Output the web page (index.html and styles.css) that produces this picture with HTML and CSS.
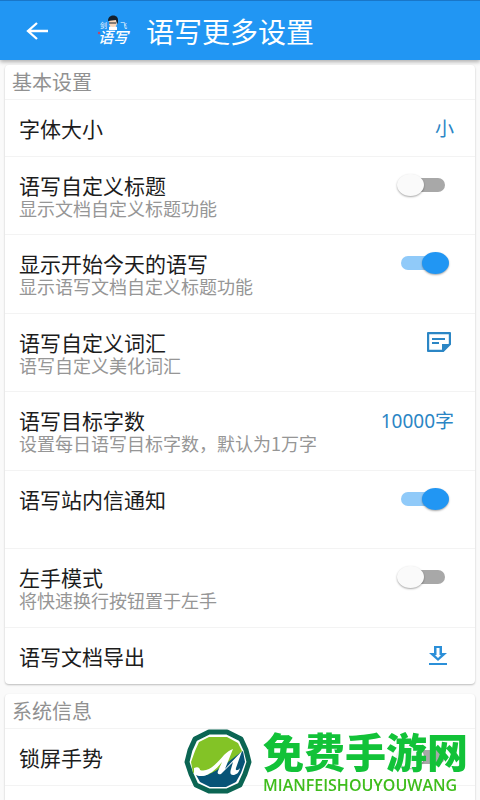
FILE: index.html
```html
<!DOCTYPE html>
<html lang="zh-CN">
<head>
    <meta charset="UTF-8">
    <meta name="viewport" content="width=device-width, initial-scale=1.0">
    <title>语写更多设置</title>
    <link rel="stylesheet" href="styles.css">
</head>
<body>
    <header class="app-bar">
        <button class="back" type="button" aria-label="返回">
            <svg width="24" height="20" viewBox="0 0 24 20" fill="none" stroke="#fff" stroke-width="2.3">
                <path d="M22 10H2M11 2L2 10l9 8"/>
            </svg>
        </button>
        <svg class="app-logo" width="36" height="32" viewBox="0 0 36 32" aria-hidden="true">
            <text class="logo-small" x="4" y="13">剑</text>
            <text class="logo-small" x="24" y="13">飞</text>
            <path fill="#fff" d="M13 12l4-2 4 2v3h-8z"/>
            <circle cx="17" cy="8" r="4" fill="#f6d7bd"/>
            <path fill="#14202c" d="M12 6c0-7 10-7 10-1 0 2 0 3-1 4l-1-4-8 1z"/>
            <path stroke="#14202c" d="M13 8h7"/>
            <circle cx="3" cy="18" r="1.2" fill="#c0476a"/>
            <text class="logo-text" x="2" y="28">语写</text>
        </svg>
        <h1>语写更多设置</h1>
    </header>

    <main>
        <section class="card">
            <h2>基本设置</h2>
            <div class="row short">
                <div class="text"><h3>字体大小</h3></div>
                <button class="value" type="button">小</button>
            </div>
            <div class="row">
                <div class="text">
                    <label for="custom-title">语写自定义标题</label>
                    <p>显示文档自定义标题功能</p>
                </div>
                <input class="switch" type="checkbox" id="custom-title">
            </div>
            <div class="row">
                <div class="text">
                    <label for="show-today">显示开始今天的语写</label>
                    <p>显示语写文档自定义标题功能</p>
                </div>
                <input class="switch" type="checkbox" id="show-today" checked>
            </div>
            <div class="row">
                <div class="text">
                    <h3>语写自定义词汇</h3>
                    <p>语写自定义美化词汇</p>
                </div>
                <button class="icon" type="button" aria-label="编辑词汇">
                    <svg width="24" height="20" viewBox="0 0 24 20">
                        <path fill="none" stroke="#2b86c5" stroke-width="2.4" stroke-linejoin="round" d="M2 1h20q1 0 1 1v10l-7 7H2q-1 0-1-1V2q0-1 1-1z"/>
                        <path fill="none" stroke="#2b86c5" stroke-width="2" d="M5 7h13M5 11h7"/>
                        <path fill="#2b86c5" d="M15 12h8l-8 7z"/>
                    </svg>
                </button>
            </div>
            <div class="row">
                <div class="text">
                    <h3>语写目标字数</h3>
                    <p>设置每日语写目标字数，默认为1万字</p>
                </div>
                <button class="value" type="button">10000字</button>
            </div>
            <div class="row">
                <div class="text"><label for="mail">语写站内信通知</label></div>
                <input class="switch" type="checkbox" id="mail" checked>
            </div>
            <div class="row">
                <div class="text">
                    <label for="left-hand">左手模式</label>
                    <p>将快速换行按钮置于左手</p>
                </div>
                <input class="switch" type="checkbox" id="left-hand">
            </div>
            <div class="row short">
                <div class="text"><h3>语写文档导出</h3></div>
                <button class="icon" type="button" aria-label="导出">
                    <svg class="download" width="20" height="20" viewBox="0 0 20 20" fill="#2b8fd8">
                        <path fill-rule="evenodd" d="M6 0h8v7h5l-9 8-9-8h5zM8.500 2v7H7l3 3 3-3h-1.500V2z"/>
                        <path d="M1 17h18v2H1z"/>
                    </svg>
                </button>
            </div>
        </section>

        <section class="card last">
            <h2>系统信息</h2>
            <div class="row short">
                <div class="text"><label for="lock">锁屏手势</label></div>
                <input class="switch" type="checkbox" id="lock">
            </div>
            <div class="row next"></div>
        </section>
    </main>

    <!-- Site mark over the page -->
    <div class="watermark">
        <svg width="68" height="66" viewBox="0 0 68 66" aria-hidden="true">
            <path fill="#fff" stroke="#0b6553" stroke-width="5" stroke-linejoin="round" d="M25 3h18l14 7 5 11 3 12-4 12-5 11-13 6H25l-13-6-5-11-4-12 3-12 5-11z"/>
            <path fill="#83c326" d="M25 8h18l11 6 5 10-1 2C44 33 31 49 20 45c-5-2-7-3-11-1L7 33l4-11 4-9z"/>
            <path fill="#075477" d="M59 22l2 11-4 11-5 9-10 5H26l-10-5-4-7c14 4 24-8 47-24z"/>
            <path fill="#fff" d="M10 39c4-2 6 0 6 2 9 3 18-8 24-15 3-3 6-5 9-6l-8 20 17-18-6 17c-1 3 2 3 4 0-1 5-4 7-7 7-3 0-3-3-2-6l2-7-12 12c-3 1-4-1-3-3l4-9C30 43 20 51 10 45z"/>
        </svg>
        <div class="mark-text">
            <strong>免费手游网</strong>
            <span>MIANFEISHOUYOUWANG</span>
        </div>
    </div>
</body>
</html>
```
FILE: styles.css
```css
* {
    box-sizing: border-box;
}

body {
    margin: 0;
    min-height: 100vh;
    display: flex;
    flex-direction: column;
    background: #fafafa;
    color: #1c1c1c;
    font-family: "Noto Sans CJK SC", sans-serif;
}

h1, h2, h3, p {
    margin: 0;
    font-weight: 400;
}

button {
    padding: 0;
    border: none;
    background: none;
    font-family: inherit;
    cursor: pointer;
}

svg {
    display: block;
}

.app-bar {
    display: flex;
    align-items: center;
    height: 60px;
    padding: 0 24px;
    background: #2196f3;
    border-top: 1px solid #1976c8;
    box-shadow: 0 2px 4px rgba(0, 0, 0, 0.3);
    color: #fff;
}

.back {
    padding: 0 2px;
}

.app-logo {
    margin: 0 14px 0 44px;
    overflow: visible;
    fill: #fff;
}

.logo-small {
    font-size: 7px;
}

.logo-text {
    font-size: 15px;
    font-style: italic;
    font-weight: 500;
}

h1 {
    font-size: 28px;
    line-height: 40px;
}

main {
    flex: 1;
    display: flex;
    flex-direction: column;
    gap: 10px;
    padding: 5px 5px 0;
}

.card {
    background: #fff;
    border-radius: 4px;
    box-shadow: 0 1px 2px rgba(0, 0, 0, 0.25);
}

.card.last {
    flex: 1;
    border-radius: 4px 4px 0 0;
}

h2 {
    padding: 0 7px;
    color: #919191;
    font-size: 20px;
    line-height: 34px;
}

.row {
    display: flex;
    justify-content: space-between;
    align-items: flex-start;
    min-height: 79px;
    padding: 15px 21px 0 14px;
    border-top: 1px solid #f3f3f3;
}

.row:nth-child(odd) {
    min-height: 78px;
}

.row.short {
    min-height: 57px;
}

.row.next {
    min-height: 0;
    padding: 0;
}

h3, label {
    display: block;
    font-size: 21px;
    line-height: 26px;
}

.text p {
    color: #969696;
    font-size: 18px;
    line-height: 20px;
}

.value {
    color: #2b86c5;
    font-family: "Noto Sans", "Noto Sans CJK SC", sans-serif;
    font-size: 19px;
    line-height: 28px;
}

.icon {
    display: flex;
    align-items: center;
    height: 26px;
    padding-right: 3px;
}

.download {
    margin-right: 3px;
}

.switch {
    appearance: none;
    position: relative;
    width: 52px;
    height: 24px;
    margin: 1px 5px 0 0;
    cursor: pointer;
}

.switch::before {
    content: "";
    position: absolute;
    left: 4px;
    right: 4px;
    top: 5px;
    height: 14px;
    border-radius: 8px;
    background: #a8a8a8;
}

.switch::after {
    content: "";
    position: absolute;
    left: 0;
    top: 1px;
    width: 27px;
    height: 22px;
    border-radius: 50%;
    background: #fafafa;
    box-shadow: 0 1px 2px rgba(0, 0, 0, 0.35);
}

.switch:checked::before {
    background: #90caf9;
}

.switch:checked::after {
    left: auto;
    right: 0;
    background: #2196f3;
}

.watermark {
    position: fixed;
    right: 12px;
    bottom: 5px;
    display: flex;
    align-items: center;
    gap: 11px;
    pointer-events: none;
}

.mark-text {
    display: flex;
    flex-direction: column;
    gap: 6px;
    color: #12c238;
}

.mark-text strong {
    font-size: 41px;
    font-weight: 900;
    line-height: 40px;
}

.mark-text span {
    font-family: "Open Sans", sans-serif;
    font-size: 16px;
    font-weight: 600;
    line-height: 18px;
    color: #3fbd1c;
}
```
